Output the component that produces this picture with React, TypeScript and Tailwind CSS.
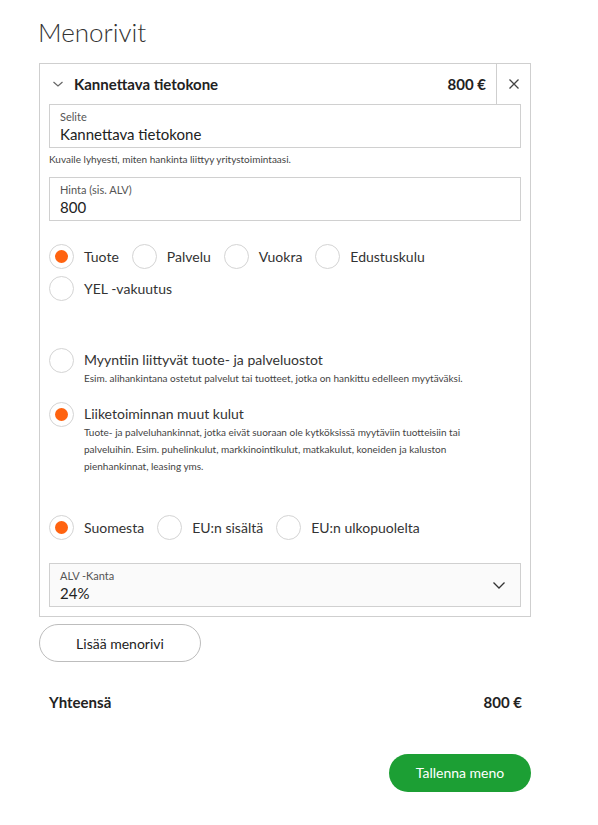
import React from "react";

const font = { fontFamily: "Lato, 'Noto Sans', sans-serif" };

const Radio = ({ checked, label }: { checked?: boolean; label: string }) => (
  <label className="flex items-center gap-[10px] h-[32px] mr-[13px]">
    <span className="w-[25px] h-[25px] rounded-full border border-[#d4d4d4] flex items-center justify-center shrink-0">
      {checked && <span className="w-[13px] h-[13px] rounded-full bg-[#ff6310]" />}
    </span>
    <span className="text-[14px] text-[#333]">{label}</span>
  </label>
);

const Field = ({ label, value }: { label: string; value: string }) => (
  <div className="h-[44px] border border-[#d0d0d0] px-[10px] pt-[5px]">
    <div className="text-[11px] leading-[13px] text-[#555]">{label}</div>
    <div className="text-[15px] leading-[22px] text-[#222]">{value}</div>
  </div>
);

export default function App() {
  return (
    <div className="w-[598px] h-[825px] bg-white px-[39px] pt-[16px]" style={font}>
      <h1 className="text-[26px] leading-[32px] font-light text-[#333] -ml-[1px]">Menorivit</h1>

      <div className="mt-[15px] w-[492px] border border-[#cfcfcf]">
        {/* otsikkorivi */}
        <div className="flex items-center h-[40px]">
          <svg className="ml-[12px] w-[12px] h-[12px]" viewBox="0 0 12 12" fill="none" stroke="#666" strokeWidth="1.2">
            <path d="M1.5 4l4.5 4 4.5-4" />
          </svg>
          <div className="ml-[10px] text-[15px] font-bold text-[#222]">Kannettava tietokone</div>
          <div className="ml-auto pr-[10px] text-[15px] font-bold text-[#222]">800 €</div>
          <div className="w-[34px] h-full border-l border-[#cfcfcf] flex items-center justify-center">
            <svg className="w-[12px] h-[12px]" viewBox="0 0 12 12" stroke="#444" strokeWidth="1.3">
              <path d="M1.5 1.5l9 9M10.5 1.5l-9 9" />
            </svg>
          </div>
        </div>

        <div className="px-[9px] pb-[9px]">
          <Field label="Selite" value="Kannettava tietokone" />
          <div className="mt-[4px] text-[10px] leading-[14px] text-[#444]">
            Kuvaile lyhyesti, miten hankinta liittyy yritystoimintaasi.
          </div>
          <div className="mt-[11px]">
            <Field label="Hinta (sis. ALV)" value="800" />
          </div>

          <div className="mt-[19px] flex flex-wrap">
            <Radio checked label="Tuote" />
            <Radio label="Palvelu" />
            <Radio label="Vuokra" />
            <Radio label="Edustuskulu" />
            <Radio label="YEL -vakuutus" />
          </div>

          <div className="mt-[44px] flex gap-[10px]">
            <span className="w-[25px] h-[25px] rounded-full border border-[#d4d4d4] shrink-0" />
            <div className="pt-[2px]">
              <div className="text-[14px] leading-[20px] text-[#333]">Myyntiin liittyvät tuote- ja palveluostot</div>
              <div className="text-[10px] leading-[17px] text-[#444]">
                Esim. alihankintana ostetut palvelut tai tuotteet, jotka on hankittu edelleen myytäväksi.
              </div>
            </div>
          </div>

          <div className="mt-[15px] flex gap-[10px]">
            <span className="w-[25px] h-[25px] rounded-full border border-[#d4d4d4] flex items-center justify-center shrink-0">
              <span className="w-[13px] h-[13px] rounded-full bg-[#ff6310]" />
            </span>
            <div className="pt-[2px] pr-[20px]">
              <div className="text-[14px] leading-[20px] text-[#333]">Liiketoiminnan muut kulut</div>
              <div className="text-[10px] leading-[17px] text-[#444]">
                Tuote- ja palveluhankinnat, jotka eivät suoraan ole kytköksissä myytäviin tuotteisiin tai palveluihin. Esim. puhelinkulut, markkinointikulut, matkakulut, koneiden ja kaluston pienhankinnat, leasing yms.
              </div>
            </div>
          </div>

          <div className="mt-[36px] flex">
            <Radio checked label="Suomesta" />
            <Radio label="EU:n sisältä" />
            <Radio label="EU:n ulkopuolelta" />
          </div>

          <div className="mt-[20px] h-[44px] border border-[#d0d0d0] bg-[#fafafa] px-[10px] pt-[5px] flex items-center">
            <div className="flex-1 self-start">
              <div className="text-[11px] leading-[13px] text-[#555]">ALV -Kanta</div>
              <div className="text-[15px] leading-[22px] text-[#222]">24%</div>
            </div>
            <svg className="w-[14px] h-[14px] mr-[4px] -mt-[5px]" viewBox="0 0 14 14" fill="none" stroke="#333" strokeWidth="1.3">
              <path d="M1.5 4.5l5.5 5.5 5.5-5.5" />
            </svg>
          </div>
        </div>
      </div>

      <button className="mt-[7px] w-[162px] h-[38px] rounded-full border border-[#bdbdbd] text-[14px] text-[#222]">
        Lisää menorivi
      </button>

      <div className="mt-[29px] flex justify-between w-[492px] pl-[10px] pr-[9px] text-[15px] font-bold text-[#222]">
        <span>Yhteensä</span>
        <span>800 €</span>
      </div>

      <div className="mt-[40px] flex justify-end w-[492px]">
        <button className="w-[142px] h-[38px] rounded-full bg-[#1c9f34] text-white text-[14px]">
          Tallenna meno
        </button>
      </div>
    </div>
  );
}
